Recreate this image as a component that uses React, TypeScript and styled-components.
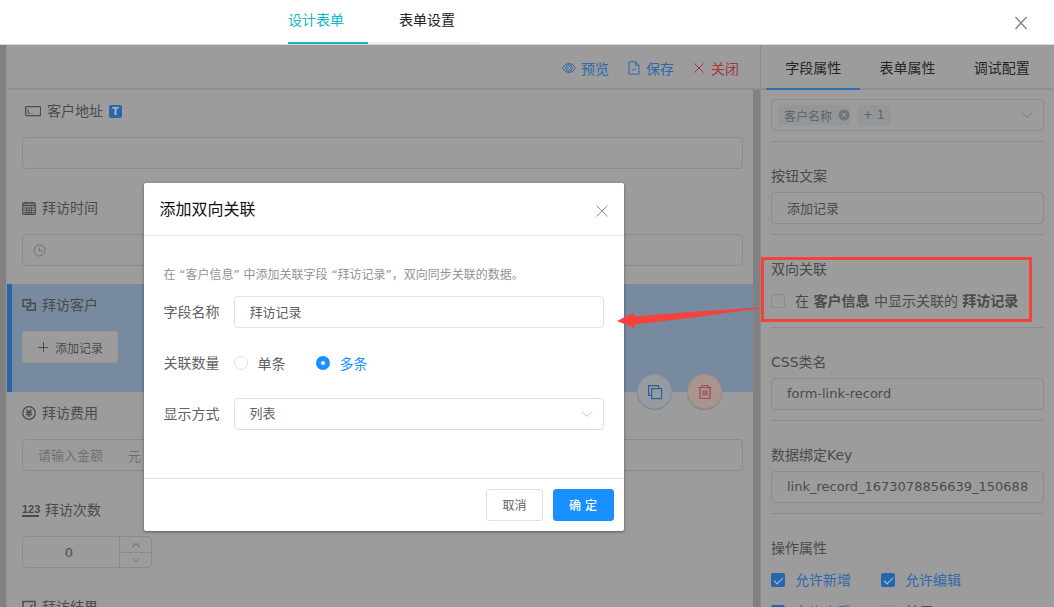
import React, { useState } from "react";
import styled, { createGlobalStyle, css } from "styled-components";

const c = {
  surface: "#9c9c9c",
  gutter: "#818181",
  line: "#8c8c8c",
  field: "#8a8c8d",
  text: "#4a4b4c",
  strong: "#262626",
  muted: "#6f7072",
  blue: "#2f69ab",
  red: "#a8323a",
  selected: "#778a9f",
  accent: "#1890ff",
  mark: "#f6413d",
};

const GlobalStyle = createGlobalStyle`
  * { box-sizing: border-box; }
  body { margin: 0; }
  body, button, input, select {
    font-family: "DejaVu Sans", "Noto Sans CJK SC", sans-serif;
    font-size: 14px;
  }
  button { border: 0; padding: 0; background: none; color: inherit; cursor: pointer; }
  svg { display: block; flex: none; }
`;

const Page = styled.div`
  display: flex;
  flex-direction: column;
  height: 100vh;
  overflow: hidden;
  background: ${c.surface};
  color: ${c.text};
`;

/* Header */
const Header = styled.header`
  display: flex;
  flex: none;
  height: 45px;
  padding: 0 26px 0 288px;
  background: #fff;
  border-bottom: 1px solid #d9d9d9;
`;
const HeaderTabs = styled.nav`
  display: flex;
  flex: 1;
`;
const HeaderTab = styled.button<{ $active?: boolean }>`
  width: ${(p) => (p.$active ? 80 : 112)}px;
  padding: 0 0 4px ${(p) => (p.$active ? 0 : 31)}px;
  text-align: left;
  color: ${(p) => (p.$active ? "#12b5c8" : "#222")};
  border-bottom: 2px solid ${(p) => (p.$active ? "#12b5c8" : "#f0f0f0")};
`;
const IconButton = styled.button`
  display: flex;
  align-items: center;
  padding-top: 2px;
  color: #8c8c8c;
`;

/* Workspace */
const Workspace = styled.div`
  display: flex;
  flex: 1;
  min-height: 0;
`;
const Gutter = styled.div`
  flex: none;
  width: 7px;
  background: ${c.gutter};
  border-right: 1px solid #959595;
`;
const Designer = styled.main`
  position: relative;
  flex: 1;
  min-width: 0;
  display: flex;
  flex-direction: column;
  border-right: 1px solid ${c.line};
`;
const Toolbar = styled.div`
  display: flex;
  flex: none;
  align-items: center;
  justify-content: flex-end;
  gap: 18px;
  height: 45px;
  padding: 2px 21px 0 0;
  border-bottom: 2px solid #8f8f8f;
`;
const ToolButton = styled.button<{ $danger?: boolean }>`
  display: flex;
  align-items: center;
  gap: 5px;
  color: ${(p) => (p.$danger ? c.red : c.blue)};
`;
const Canvas = styled.div`
  flex: 1;
  border-right: 7px solid ${c.gutter};
`;
const Item = styled.section<{ $selected?: boolean }>`
  position: relative;
  padding: 11px 10px 18px 15px;
  ${(p) =>
    p.$selected &&
    css`
      padding: 11px 10px 29px 10px;
      border-left: 5px solid #2a66a3;
      background: ${c.selected};
    `}
`;
const ItemLabel = styled.label`
  display: flex;
  align-items: center;
  gap: 6px;
  height: 20px;
  margin-bottom: 16px;
  line-height: 20px;
`;
const TypeBadge = styled.span`
  display: grid;
  place-items: center;
  width: 13px;
  height: 13px;
  border-radius: 2px;
  background: #2a66a8;
  color: #a9b8c8;
  font-size: 10px;
  font-weight: bold;
  line-height: 13px;
`;
const NumberGlyph = styled.span`
  width: 17px;
  border-bottom: 2px solid ${c.text};
  font: bold 11px/11px "Liberation Sans", sans-serif;
`;

const fieldFrame = css`
  height: 32px;
  border: 1px solid ${c.field};
  border-radius: 4px;
  background: transparent;
`;
const TextInput = styled.input<{ $light?: boolean }>`
  ${fieldFrame}
  display: block;
  width: 100%;
  padding: 0 15px 2px;
  color: ${c.text};
  font-size: 13px;
  outline: 0;
  ${(p) =>
    p.$light &&
    css`
      border-color: #dcdfe6;
      color: #606266;
    `}
`;
const InputBox = styled.div`
  ${fieldFrame}
  display: flex;
  align-items: center;
  gap: 10px;
  padding: 0 10px;
  color: ${c.muted};
`;
const BareInput = styled.input`
  flex: 1;
  min-width: 0;
  border: 0;
  background: none;
  outline: 0;
`;
const AmountBox = styled(InputBox)`
  gap: 24px;
  padding: 0 15px;
  font-size: 13px;
`;
const AmountInput = styled.input`
  width: 66px;
  padding: 0;
  border: 0;
  background: none;
  font-size: 13px;
  outline: 0;
  &::placeholder { color: ${c.muted}; opacity: 1; }
`;
const AddButton = styled.button`
  display: flex;
  align-items: center;
  gap: 6px;
  height: 32px;
  padding: 0 14px;
  border: 1px solid #979797;
  border-radius: 3px;
  background: ${c.surface};
  font-size: 12px;
`;
const Stepper = styled.div`
  ${fieldFrame}
  display: flex;
  width: 130px;
`;
const StepInput = styled.input`
  flex: 1;
  min-width: 0;
  padding: 0 4px 0 0;
  border: 0;
  background: none;
  color: ${c.text};
  font-size: 13px;
  text-align: center;
  outline: 0;
`;
const StepButtons = styled.div`
  display: grid;
  grid-template-rows: 1fr 1fr;
  width: 32px;
  border-left: 1px solid ${c.field};
`;
const StepButton = styled.button`
  display: grid;
  place-items: center;
  color: #5e6062;
  & + & { border-top: 1px solid ${c.field}; color: #7c7e80; }
`;
const ItemActions = styled.div`
  position: absolute;
  right: 31px;
  bottom: -17px;
  z-index: 1;
  display: flex;
  gap: 15px;
`;
const RoundButton = styled.button<{ $danger?: boolean }>`
  display: grid;
  place-items: center;
  width: 35px;
  height: 35px;
  border: 1px solid ${(p) => (p.$danger ? "#a58c8a" : "#8796a6")};
  border-radius: 50%;
  background: ${(p) => (p.$danger ? "#a8958f" : "#959b9f")};
  color: ${(p) => (p.$danger ? "#a34750" : "#2b5f9f")};
  box-shadow: 0 1px 1px rgba(70, 90, 120, 0.4);
`;

/* Properties panel */
const Panel = styled.aside`
  flex: none;
  width: 293px;
`;
const PanelTabs = styled.nav`
  display: flex;
  height: 45px;
  padding: 0 5px;
  border-bottom: 2px solid #8f8f8f;
`;
const PanelTab = styled.button<{ $active?: boolean }>`
  flex: 1;
  height: 45px;
  color: ${c.strong};
  border-bottom: 2px solid ${(p) => (p.$active ? "#2b6fb5" : "transparent")};
`;
const Group = styled.section`
  position: relative;
  margin: 0 10px;
  padding: 24px 0 10px;
  border-bottom: 1px solid ${c.line};
`;
const TopGroup = styled(Group)`
  padding-top: 9px;
`;
const GroupLabel = styled.label`
  display: block;
  height: 20px;
  margin-bottom: 6px;
  line-height: 20px;
`;
const TagSelect = styled.button`
  ${fieldFrame}
  display: flex;
  align-items: center;
  gap: 7px;
  width: 100%;
  padding: 0 10px 0 6px;
`;
const Tag = styled.span<{ $closable?: boolean }>`
  display: flex;
  align-items: center;
  gap: 6px;
  height: 20px;
  padding: 0 ${(p) => (p.$closable ? 0 : 6)}px 0 6px;
  border-radius: 3px;
  background: #939799;
  color: #606264;
  font-size: 12px;
`;
const TagArrow = styled.span`
  margin-left: auto;
  color: #77797b;
`;
const CheckRow = styled.div`
  display: grid;
  grid-template-columns: 110px 1fr;
`;
const CheckLabel = styled.label<{ $on?: boolean }>`
  display: flex;
  align-items: center;
  gap: 10px;
  height: 32px;
  white-space: nowrap;
  line-height: 20px;
  color: ${(p) => (p.$on ? c.blue : c.text)};
`;
const CheckBox = styled.input`
  appearance: none;
  display: grid;
  place-items: center;
  flex: none;
  width: 14px;
  height: 14px;
  margin: 0;
  border: 1px solid ${c.field};
  border-radius: 2px;
  &:checked { background: #2567ac; border-color: #2567ac; }
  &:checked::after {
    content: "";
    width: 4px;
    height: 8px;
    margin-bottom: 2px;
    border: solid #b5c2cf;
    border-width: 0 1px 1px 0;
    transform: rotate(45deg);
  }
`;

/* Annotation over the highlighted property */
const Highlight = styled.div`
  position: absolute;
  z-index: 6;
  top: 22px;
  left: -10px;
  right: 12px;
  bottom: 5px;
  border: 3px solid ${c.mark};
  pointer-events: none;
`;
const Arrow = styled.svg`
  position: absolute;
  z-index: 6;
  top: 71px;
  left: -154px;
  pointer-events: none;
`;

/* Dialog */
const DialogLayer = styled.div`
  position: absolute;
  z-index: 5;
  inset: 138px 0 auto 0;
  display: flex;
  justify-content: center;
  pointer-events: none;
`;
const Dialog = styled.div`
  width: 480px;
  border-radius: 2px;
  background: #fff;
  color: #606266;
  box-shadow: 0 1px 3px rgba(0, 0, 0, 0.45);
  pointer-events: auto;
`;
const DialogHeader = styled.div`
  display: flex;
  align-items: center;
  justify-content: space-between;
  height: 53px;
  padding: 2px 15px 0 16px;
  border-bottom: 1px solid #e8e8e8;
`;
const DialogTitle = styled.h2`
  margin: 0;
  color: #111;
  font-size: 16px;
  font-weight: normal;
  line-height: 24px;
`;
const DialogBody = styled.form`
  padding: 29px 20px 48px;
`;
const Hint = styled.p`
  margin: 0 0 11px;
  color: #909399;
  font-size: 12px;
  line-height: 20px;
`;
const FormRow = styled.div`
  display: grid;
  grid-template-columns: 70px 1fr;
  align-items: center;
  height: 32px;
  & + & { margin-top: 19px; }
`;
const RowLabel = styled.label`
  padding-bottom: 2px;
`;
const RadioGroup = styled.div`
  display: flex;
  gap: 30px;
`;
const RadioLabel = styled.label<{ $on?: boolean }>`
  display: flex;
  align-items: center;
  gap: 10px;
  color: ${(p) => (p.$on ? c.accent : "#606266")};
`;
const Radio = styled.input`
  appearance: none;
  width: 14px;
  height: 14px;
  margin: 0;
  border: 1px solid #dcdfe6;
  border-radius: 50%;
  background: #fff;
  &:checked { border: 5px solid ${c.accent}; }
`;
const SelectWrap = styled.div`
  position: relative;
`;
const Select = styled.select`
  ${fieldFrame}
  appearance: none;
  display: block;
  width: 100%;
  padding: 0 15px 2px;
  border-color: #dcdfe6;
  background: #fff;
  color: #606266;
  font-size: 13px;
`;
const SelectArrow = styled.span`
  position: absolute;
  top: 10px;
  right: 11px;
  color: #c0c4cc;
  pointer-events: none;
`;
const DialogFooter = styled.div`
  display: flex;
  justify-content: flex-end;
  gap: 10px;
  padding: 10px;
  border-top: 1px solid #e0e0e0;
`;
const DialogButton = styled.button<{ $primary?: boolean }>`
  min-width: ${(p) => (p.$primary ? 61 : 56)}px;
  height: 32px;
  padding: 0 15px 2px;
  border: 1px solid ${(p) => (p.$primary ? c.accent : "#dcdfe6")};
  border-radius: 3px;
  background: ${(p) => (p.$primary ? c.accent : "#fff")};
  color: ${(p) => (p.$primary ? "#fff" : "#606266")};
  font-size: 12px;
  font-weight: ${(p) => (p.$primary ? 500 : 400)};
  white-space: pre;
`;

type IconProps = { w?: number; h?: number; sw?: number; children: React.ReactNode };
const Icon = ({ w = 14, h = 14, sw = 1, children }: IconProps) => (
  <svg width={w} height={h} viewBox={`0 0 ${w} ${h}`} fill="none" stroke="currentColor" strokeWidth={sw} aria-hidden="true">
    {children}
  </svg>
);

const Cross = ({ size = 14, sw = 1 }: { size?: number; sw?: number }) => (
  <Icon w={size} h={size} sw={sw}>
    <path d={`M1.500 1L${size - 1.5} ${size - 1}M${size - 1.5} 1L1.500 ${size - 1}`} />
  </Icon>
);
const Chevron = () => (
  <Icon w={12} h={12}>
    <path d="M1 3.500l5 5 5-5" />
  </Icon>
);
const EyeIcon = () => (
  <Icon>
    <path d="M.6 7C2.200 4 4.400 2.600 7 2.600S11.800 4 13.400 7C11.800 10 9.600 11.400 7 11.400S2.200 10 .6 7z" />
    <circle cx="7" cy="7" r="3.300" />
    <circle cx="7" cy="7" r="1.600" strokeOpacity=".6" />
  </Icon>
);
const SaveIcon = () => (
  <Icon>
    <path d="M2 .8h6.500L12 4.300v8.900H2zM8.500.8v3.500H12M5 8l1.700 1.700L9.300 7" />
  </Icon>
);
const TextFieldIcon = () => (
  <Icon w={19} h={14} sw={1.3}>
    <rect x="3.600" y="2.600" width="15" height="9" rx="1" />
    <path d="M6 5v4.300h2M9.500 9.300h1" strokeWidth="1" />
  </Icon>
);
const CalendarIcon = () => (
  <Icon w={14} h={14}>
    <rect x=".8" y="2" width="12.400" height="11.400" rx="1" strokeWidth="1.300" />
    <path d="M1 4.500h12" strokeWidth="1.400" />
    <path d="M4 .5v3M10 .5v3M2 7h10M2 9.300h10M2 11.500h10M4.500 6v7M7 6v7M9.500 6v7" strokeWidth=".9" />
  </Icon>
);
const ClockIcon = () => (
  <Icon w={13} h={13}>
    <circle cx="6.500" cy="6.500" r="5.500" />
    <path d="M6.500 3.500v3.500h3" />
  </Icon>
);
const LinkRecordIcon = () => (
  <Icon w={14} h={14} sw={1.5}>
    <path d="M4.500 8.500H1V1.800h7.500V5" />
    <path d="M4.800 5.300h3.700v3.200M9.500 5.300h3.700v7H5.500V8.500h3" />
  </Icon>
);
const YuanIcon = () => (
  <Icon w={14} h={14} sw={1.3}>
    <circle cx="7" cy="7" r="6.300" />
    <path d="M4.500 3.500L7 6l2.500-2.500M7 6v5M4 6.500h6M4 8.700h6" />
  </Icon>
);
const TickBoxIcon = () => (
  <Icon w={14} h={14} sw={1.5}>
    <path d="M1 1.500h12v11.500H1zM4 7l2.500 2.500 4-5" />
  </Icon>
);
const PlusIcon = () => (
  <Icon w={12} h={12}>
    <path d="M1 6.500h10M6.500 1v10" />
  </Icon>
);
const CopyIcon = () => (
  <Icon w={16} h={16} sw={1.2}>
    <path d="M4 11.400H1.600V1.600h10V4" />
    <rect x="4.600" y="4.600" width="10" height="10" />
  </Icon>
);
const TrashIcon = () => (
  <Icon w={16} h={16} sw={1.2}>
    <path d="M1.500 3.500h13M5 3.500v-2h6v2M3 3.500v11h10v-11M6 6.500v5M8 6.500v5M10 6.500v5" />
  </Icon>
);

type CheckProps = { id: string; text: string; checked?: boolean };
const Check = ({ id, text, checked }: CheckProps) => {
  const [on, setOn] = useState(!!checked);
  return (
    <CheckLabel $on={on} htmlFor={id}>
      <CheckBox id={id} type="checkbox" checked={on} onChange={() => setOn(!on)} />
      {text}
    </CheckLabel>
  );
};

const LinkDialog = () => {
  const [count, setCount] = useState("多条");
  return (
    <DialogLayer>
      <Dialog role="dialog" aria-labelledby="dialog-title">
        <DialogHeader>
          <DialogTitle id="dialog-title">添加双向关联</DialogTitle>
          <IconButton aria-label="关闭对话框">
            <Icon><path d="M1.500 1.500l11 11M12.500 1.500l-11 11" /></Icon>
          </IconButton>
        </DialogHeader>
        <DialogBody>
          <Hint>在 “客户信息” 中添加关联字段 “拜访记录”，双向同步关联的数据。</Hint>
          <FormRow>
            <RowLabel htmlFor="field-name">字段名称</RowLabel>
            <TextInput $light id="field-name" defaultValue="拜访记录" />
          </FormRow>
          <FormRow>
            <RowLabel as="span" id="count-label">关联数量</RowLabel>
            <RadioGroup role="radiogroup" aria-labelledby="count-label">
              {["单条", "多条"].map((name) => (
                <RadioLabel key={name} $on={count === name}>
                  <Radio type="radio" name="count" checked={count === name} onChange={() => setCount(name)} />
                  {name}
                </RadioLabel>
              ))}
            </RadioGroup>
          </FormRow>
          <FormRow>
            <RowLabel htmlFor="display-mode">显示方式</RowLabel>
            <SelectWrap>
              <Select id="display-mode">
                <option>列表</option>
              </Select>
              <SelectArrow>
                <Chevron />
              </SelectArrow>
            </SelectWrap>
          </FormRow>
        </DialogBody>
        <DialogFooter>
          <DialogButton>取消</DialogButton>
          <DialogButton $primary>确 定</DialogButton>
        </DialogFooter>
      </Dialog>
    </DialogLayer>
  );
};

export default function App() {
  return (
    <Page>
      <GlobalStyle />
      <Header>
        <HeaderTabs>
          <HeaderTab $active>设计表单</HeaderTab>
          <HeaderTab>表单设置</HeaderTab>
        </HeaderTabs>
        <IconButton aria-label="关闭">
          <Cross size={14} sw={1.6} />
        </IconButton>
      </Header>

      <Workspace>
        <Gutter />
        <Designer>
          <Toolbar>
            <ToolButton><EyeIcon />预览</ToolButton>
            <ToolButton><SaveIcon />保存</ToolButton>
            <ToolButton $danger>
              <Icon><path d="M2.500 2.500l9 9M11.500 2.500l-9 9" /></Icon>
              关闭
            </ToolButton>
          </Toolbar>
          <Canvas>
            <Item>
              <ItemLabel htmlFor="address"><TextFieldIcon />客户地址<TypeBadge>T</TypeBadge></ItemLabel>
              <TextInput id="address" />
            </Item>
            <Item>
              <ItemLabel htmlFor="visit-time"><CalendarIcon />拜访时间</ItemLabel>
              <InputBox><ClockIcon /><BareInput id="visit-time" /></InputBox>
            </Item>
            <Item $selected>
              <ItemLabel as="div"><LinkRecordIcon />拜访客户</ItemLabel>
              <AddButton><PlusIcon />添加记录</AddButton>
              <ItemActions>
                <RoundButton aria-label="复制"><CopyIcon /></RoundButton>
                <RoundButton $danger aria-label="删除"><TrashIcon /></RoundButton>
              </ItemActions>
            </Item>
            <Item>
              <ItemLabel htmlFor="cost"><YuanIcon />拜访费用</ItemLabel>
              <AmountBox><AmountInput id="cost" placeholder="请输入金额" />元</AmountBox>
            </Item>
            <Item>
              <ItemLabel htmlFor="visits"><NumberGlyph>123</NumberGlyph>拜访次数</ItemLabel>
              <Stepper>
                <StepInput id="visits" defaultValue="0" />
                <StepButtons>
                  <StepButton aria-label="增加"><Icon w={8} h={6}><path d="M.5 5L4 1.500 7.500 5" /></Icon></StepButton>
                  <StepButton aria-label="减少"><Icon w={8} h={6}><path d="M.5 1L4 4.500 7.500 1" /></Icon></StepButton>
                </StepButtons>
              </Stepper>
            </Item>
            <Item>
              <ItemLabel as="div"><TickBoxIcon />拜访结果</ItemLabel>
            </Item>
          </Canvas>
          <LinkDialog />
        </Designer>

        <Panel>
          <PanelTabs>
            <PanelTab $active>字段属性</PanelTab>
            <PanelTab>表单属性</PanelTab>
            <PanelTab>调试配置</PanelTab>
          </PanelTabs>
          <TopGroup>
            <TagSelect aria-haspopup="listbox">
              <Tag $closable>
                客户名称
                <svg width="12" height="12" viewBox="0 0 12 12" aria-hidden="true">
                  <circle cx="6" cy="6" r="5.500" fill="#737577" />
                  <path d="M4 4l4 4M8 4l-4 4" stroke="#9c9c9c" />
                </svg>
              </Tag>
              <Tag>+ 1</Tag>
              <TagArrow><Chevron /></TagArrow>
            </TagSelect>
          </TopGroup>
          <Group>
            <GroupLabel htmlFor="button-text">按钮文案</GroupLabel>
            <TextInput id="button-text" defaultValue="添加记录" />
          </Group>
          <Group>
            <GroupLabel as="div">双向关联</GroupLabel>
            <CheckLabel htmlFor="two-way">
              <CheckBox id="two-way" type="checkbox" />
              <span>在 <b>客户信息</b> 中显示关联的 <b>拜访记录</b></span>
            </CheckLabel>
            <Highlight />
            <Arrow width="144" height="23" viewBox="0 0 144 23" aria-hidden="true">
              <path d="M0 15L17 6.500V10.500L80 5.500 143 1.500V2.500L80 11 17.500 18.500V22z" fill={c.mark} />
            </Arrow>
          </Group>
          <Group>
            <GroupLabel htmlFor="css-class">CSS类名</GroupLabel>
            <TextInput id="css-class" defaultValue="form-link-record" />
          </Group>
          <Group>
            <GroupLabel htmlFor="bind-key">数据绑定Key</GroupLabel>
            <TextInput id="bind-key" defaultValue="link_record_1673078856639_150688" />
          </Group>
          <Group>
            <GroupLabel as="div">操作属性</GroupLabel>
            <CheckRow>
              <Check id="allow-add" text="允许新增" checked />
              <Check id="allow-edit" text="允许编辑" checked />
              <Check id="allow-view" text="允许查看" checked />
              <Check id="hidden" text="禁用" />
            </CheckRow>
          </Group>
        </Panel>
      </Workspace>
    </Page>
  );
}
